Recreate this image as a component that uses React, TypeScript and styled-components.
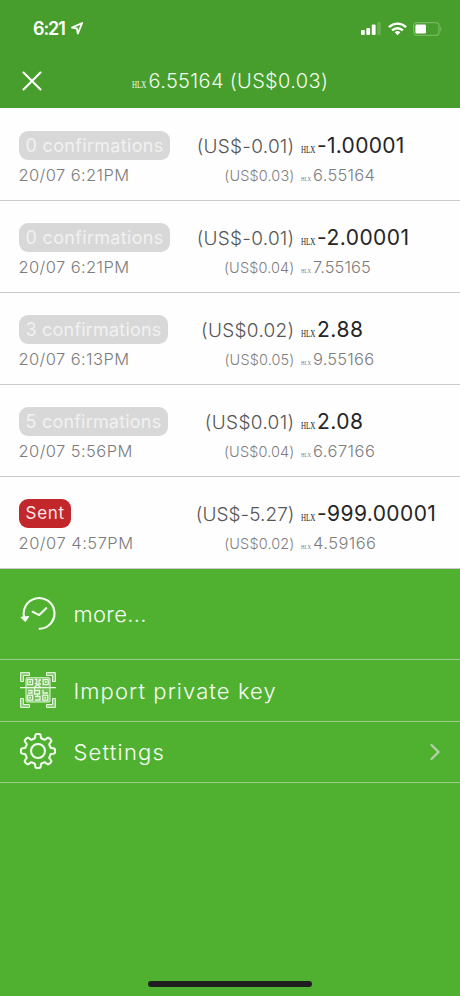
import React from 'react';
import styled, { createGlobalStyle } from 'styled-components';

const Global = createGlobalStyle`
  * { box-sizing: border-box; }
  body { margin: 0; background: #50b131; font-family: Inter, "Noto Sans", sans-serif; }
`;

const Screen = styled.main`
  width: 460px;
  height: 996px;
  display: flex;
  flex-direction: column;
  background: #50b131;
  overflow: hidden;
`;

const Header = styled.header`
  height: 108px;
  flex: none;
  background: #479e2c;
  color: #f1faee;
`;

const StatusBar = styled.div`
  height: 54px;
  display: flex;
  align-items: center;
  justify-content: space-between;
  padding: 3px 18px 0 33px;
`;

const Clock = styled.div`
  display: flex;
  align-items: center;
  gap: 6px;
  font-size: 18px;
  font-weight: 600;
  letter-spacing: -1.1px;
  color: #fff;
`;

const Indicators = styled.div`
  display: flex;
  align-items: center;
  gap: 6.5px;
`;

const TitleBar = styled.div`
  height: 54px;
  display: grid;
  grid-template-columns: 132px 1fr;
  align-items: center;
`;

const CloseButton = styled.button`
  display: flex;
  justify-self: start;
  margin-left: 22px;
  padding: 0;
  border: 0;
  background: none;
`;

const Balance = styled.div`
  display: flex;
  align-items: baseline;
  font-size: 20px;
  font-weight: 300;
  letter-spacing: 0.34px;
`;

const UnitBox = styled.span<{ $small?: boolean }>`
  flex: none;
  width: ${p => (p.$small ? 12.5 : 16.5)}px;
`;

const UnitText = styled.span<{ $small?: boolean }>`
  display: inline-block;
  font-family: "Liberation Serif", serif;
  font-weight: 400;
  font-size: ${p => (p.$small ? 7 : 10)}px;
  line-height: 1;
  letter-spacing: 0;
  transform: scaleX(0.7);
  transform-origin: left bottom;
`;

const List = styled.ul`
  margin: 0;
  padding: 1px 0 0;
  list-style: none;
  flex: none;
  background: #fefefe;
`;

const Row = styled.li`
  height: 92px;
  display: grid;
  grid-template-columns: 160px 115.5px 1fr;
  grid-template-rows: 29px 30px;
  padding: 22px 0 0 19px;
  border-bottom: 1px solid #cacaca;
  align-items: baseline;
`;

const Badge = styled.span<{ $sent?: boolean; $spacing: number }>`
  justify-self: start;
  align-self: start;
  height: 29px;
  line-height: 29px;
  padding: 0 6.5px;
  border-radius: 9px;
  font-size: ${p => (p.$sent ? 17 : 18)}px;
  font-weight: 400;
  letter-spacing: ${p => p.$spacing}px;
  color: ${p => (p.$sent ? '#fbe6e6' : '#f1f1f1')};
  background: ${p => (p.$sent ? '#c1272b' : '#d8d8d8')};
`;

const Stamp = styled.time<{ $spacing: number }>`
  font-size: 16.5px;
  line-height: 30px;
  font-weight: 300;
  letter-spacing: ${p => p.$spacing}px;
  margin-left: -0.5px;
  color: #7c7c7c;
`;

const Fiat = styled.span<{ $small?: boolean; $spacing: number }>`
  justify-self: end;
  white-space: nowrap;
  font-size: ${p => (p.$small ? 14.5 : 19)}px;
  line-height: ${p => (p.$small ? 30 : 29)}px;
  font-weight: 300;
  letter-spacing: ${p => p.$spacing}px;
  color: ${p => (p.$small ? '#7e7e7e' : '#565656')};
`;

const Amount = styled.span<{ $small?: boolean; $spacing: number }>`
  display: flex;
  align-items: baseline;
  margin-left: 6px;
  white-space: nowrap;
  font-size: ${p => (p.$small ? 16.5 : 21)}px;
  line-height: ${p => (p.$small ? 30 : 29)}px;
  font-weight: ${p => (p.$small ? 300 : 400)};
  letter-spacing: ${p => p.$spacing}px;
  color: ${p => (p.$small ? '#7c7c7c' : '#262626')};
`;

const MenuItem = styled.button<{ $tall?: boolean; $height: number }>`
  width: 100%;
  height: ${p => p.$height}px;
  flex: none;
  display: grid;
  grid-template-columns: 36px 1fr auto;
  column-gap: 17.5px;
  align-items: center;
  padding: 0 19px ${p => (p.$tall ? 1 : 0)}px 20px;
  border: 0;
  border-bottom: 1px solid #9cce89;
  background: none;
  color: #f6fdf4;
  font: 300 22px Inter, "Noto Sans", sans-serif;
  text-align: left;
`;

const Label = styled.span<{ $spacing: number }>`
  letter-spacing: ${p => p.$spacing}px;
`;

const HomeIndicator = styled.div`
  width: 164px;
  height: 6px;
  margin: auto auto 9px 148px;
  border-radius: 3px;
  background: #1f1f1f;
`;

const Unit = ({ small }: { small?: boolean }) => (
  <UnitBox $small={small}><UnitText $small={small}>HLX</UnitText></UnitBox>
);

const LocationIcon = () => (
  <svg width="13" height="14" viewBox="0 0 13 14" fill="none" stroke="#fff" strokeWidth="1.8" strokeLinejoin="round">
    <path d="M11.2 1 1 5.600l4.900.9.9 5.200z" />
  </svg>
);

const SignalIcon = () => (
  <svg width="20" height="13" viewBox="0 0 20 13" fill="#fff">
    <rect x="0" y="8" width="3.8" height="5" rx="1" />
    <rect x="5.3" y="6" width="3.8" height="7" rx="1" />
    <rect x="10.8" y="2.4" width="3.8" height="10.6" rx="1" />
    <rect x="16.2" y="0" width="3.6" height="13" rx="1" opacity=".18" />
  </svg>
);

const WifiIcon = () => (
  <svg width="19" height="14" viewBox="0 0 19 14" fill="none" stroke="#fff" strokeWidth="2.4">
    <path d="M1 5.1a12.2 12.2 0 0 1 17 0M4.1 8.4a7.8 7.8 0 0 1 10.8 0" />
    <path d="m9.5 13.2-2.9-2.9a4.2 4.2 0 0 1 5.8 0z" fill="#fff" stroke="none" />
  </svg>
);

const BatteryIcon = () => (
  <svg width="29" height="14" viewBox="0 0 29 14">
    <rect x=".7" y=".7" width="25.3" height="12.6" rx="3" fill="none" stroke="#fff" strokeOpacity=".25" strokeWidth="1.3" />
    <path d="M27.2 4.6v4.8c1.7-.8 1.7-4 0-4.8z" fill="#fff" opacity=".3" />
    <rect x="2.4" y="2.4" width="10.6" height="9.2" rx="1.4" fill="#fff" />
  </svg>
);

const CloseIcon = () => (
  <svg width="20" height="20" viewBox="0 0 20 20" stroke="#fff" strokeWidth="2.1" strokeLinecap="round">
    <path d="m1.5 1.5 17 17M18.5 1.5l-17 17" />
  </svg>
);

const HistoryIcon = () => (
  <svg width="36" height="36" viewBox="0 0 36 36" fill="none" stroke="#f4fcf1" strokeWidth="2.1" strokeLinecap="round" strokeLinejoin="round">
    <path d="M4.5 22.4A15.4 15.4 0 1 1 19.600 32.800" />
    <path d="M12.6 15.800 19.2 19.100 26.2 12.200" />
    <path d="M1.2 21.4 5.4 25.2 8.5 20.6z" fill="#f4fcf1" strokeWidth="1.2" />
  </svg>
);

const QrIcon = () => (
  <svg width="36" height="38" viewBox="0 0 36 38" fill="none" stroke="#e9f8e3" strokeWidth="1">
    <path d="M.6 9.5V.6h8.9v2.9h-6v6zM26.5.6h8.9v8.9h-2.9v-6h-6zM.6 26.5v8.9h8.9v-2.9h-6v-6zM35.4 26.5v8.9h-8.9v-2.9h6v-6z" fill="#e9f8e3" fillOpacity=".4" />
    <rect x="6" y="5.8" width="24" height="24.2" rx="1" fill="#fff" fillOpacity=".18" />
    <path d="M0 15.6h36" strokeWidth="1.3" />
    <g strokeWidth="1.3">
      <rect x="7.6" y="7.6" width="5" height="5" />
      <rect x="23.2" y="7.6" width="5" height="5" />
      <rect x="7.6" y="23.2" width="5" height="5" />
      <rect x="22.8" y="23.2" width="5" height="5" />
      <path d="M14.8 7.5h2v4h-2M21 8h-2v4h2M14.5 17.5v-2l3-3 3 3M8 18.5h4V21H8M14.5 18.5h5V22h-5zM23 17.8V21h5M15 24.5h5V28h-5M17.5 22v3" />
    </g>
    <g fill="#e9f8e3" stroke="none">
      <rect x="9.2" y="9.2" width="1.8" height="1.8" />
      <rect x="24.8" y="9.2" width="1.8" height="1.8" />
      <rect x="9.2" y="24.8" width="1.8" height="1.8" />
      <rect x="24.4" y="24.8" width="1.8" height="1.8" />
    </g>
  </svg>
);

// Gear outline: eight rounded teeth around the hub.
const gearPath = Array.from({ length: 240 }, (_, i) => {
  const angle = (i / 240) * Math.PI * 2;
  const r = 15 + 2.1 * Math.tanh(2.8 * Math.cos(8 * angle) - 0.2);
  return `${i ? 'L' : 'M'}${(18 + r * Math.sin(angle)).toFixed(2)} ${(18 - r * Math.cos(angle)).toFixed(2)}`;
}).join('') + 'Z';

const GearIcon = () => (
  <svg width="36" height="38" viewBox="0 0 36 38" fill="none" stroke="#f1fbee" strokeWidth="2.1" strokeLinejoin="round">
    <path d={gearPath} />
    <circle cx="18" cy="18" r="7" />
  </svg>
);

const ChevronIcon = () => (
  <svg width="12" height="18" viewBox="0 0 12 18" fill="none" stroke="#b9cdb1" strokeWidth="2.2" strokeLinecap="round">
    <path d="m2.5 2 7 7-7 7" />
  </svg>
);

// `track` holds letter spacing for: badge, time, fiat, amount, balance.
const transactions = [
  { badge: '0 confirmations', time: '20/07 6:21PM', fiat: '(US$-0.01)', amount: '-1.00001', fiatBalance: '(US$0.03)', balance: '6.55164', track: [0.32, 0.4, 0.26, 0.3, 0.3] },
  { badge: '0 confirmations', time: '20/07 6:21PM', fiat: '(US$-0.01)', amount: '-2.00001', fiatBalance: '(US$0.04)', balance: '7.55165', track: [0.32, 0.4, 0.26, 0.47, 0.08] },
  { badge: '3 confirmations', time: '20/07 6:13PM', fiat: '(US$0.02)', amount: '2.88', fiatBalance: '(US$0.05)', balance: '9.55166', track: [0.2, 0.4, 0.3, 0.5, 0.2] },
  { badge: '5 confirmations', time: '20/07 5:56PM', fiat: '(US$0.01)', amount: '2.08', fiatBalance: '(US$0.04)', balance: '6.67166', track: [0.2, 0.42, 0.35, 0.5, 0.45] },
  { badge: 'Sent', sent: true, time: '20/07 4:57PM', fiat: '(US$-5.27)', amount: '-999.00001', fiatBalance: '(US$0.02)', balance: '4.59166', track: [0.75, 0.5, 0.05, 0.4, 0.45] },
];

export default function App() {
  return (
    <Screen>
      <Global />
      <Header>
        <StatusBar>
          <Clock>6:21<LocationIcon /></Clock>
          <Indicators><SignalIcon /><WifiIcon /><BatteryIcon /></Indicators>
        </StatusBar>
        <TitleBar>
          <CloseButton aria-label="Close"><CloseIcon /></CloseButton>
          <Balance><Unit />6.55164 (US$0.03)</Balance>
        </TitleBar>
      </Header>
      <List>
        {transactions.map((t, i) => (
          <Row key={i}>
            <Badge $sent={t.sent} $spacing={t.track[0]}>{t.badge}</Badge>
            <Fiat $spacing={t.track[2]}>{t.fiat}</Fiat>
            <Amount $spacing={t.track[3]}><Unit />{t.amount}</Amount>
            <Stamp $spacing={t.track[1]}>{t.time}</Stamp>
            <Fiat $small $spacing={0.12}>{t.fiatBalance}</Fiat>
            <Amount $small $spacing={t.track[4]}><Unit small />{t.balance}</Amount>
          </Row>
        ))}
      </List>
      <MenuItem $height={91} $tall><HistoryIcon /><Label $spacing={0.3}>more...</Label></MenuItem>
      <MenuItem $height={62}><QrIcon /><Label $spacing={1.08}>Import private key</Label></MenuItem>
      <MenuItem $height={61}><GearIcon /><Label $spacing={1.2}>Settings</Label><ChevronIcon /></MenuItem>
      <HomeIndicator />
    </Screen>
  );
}
